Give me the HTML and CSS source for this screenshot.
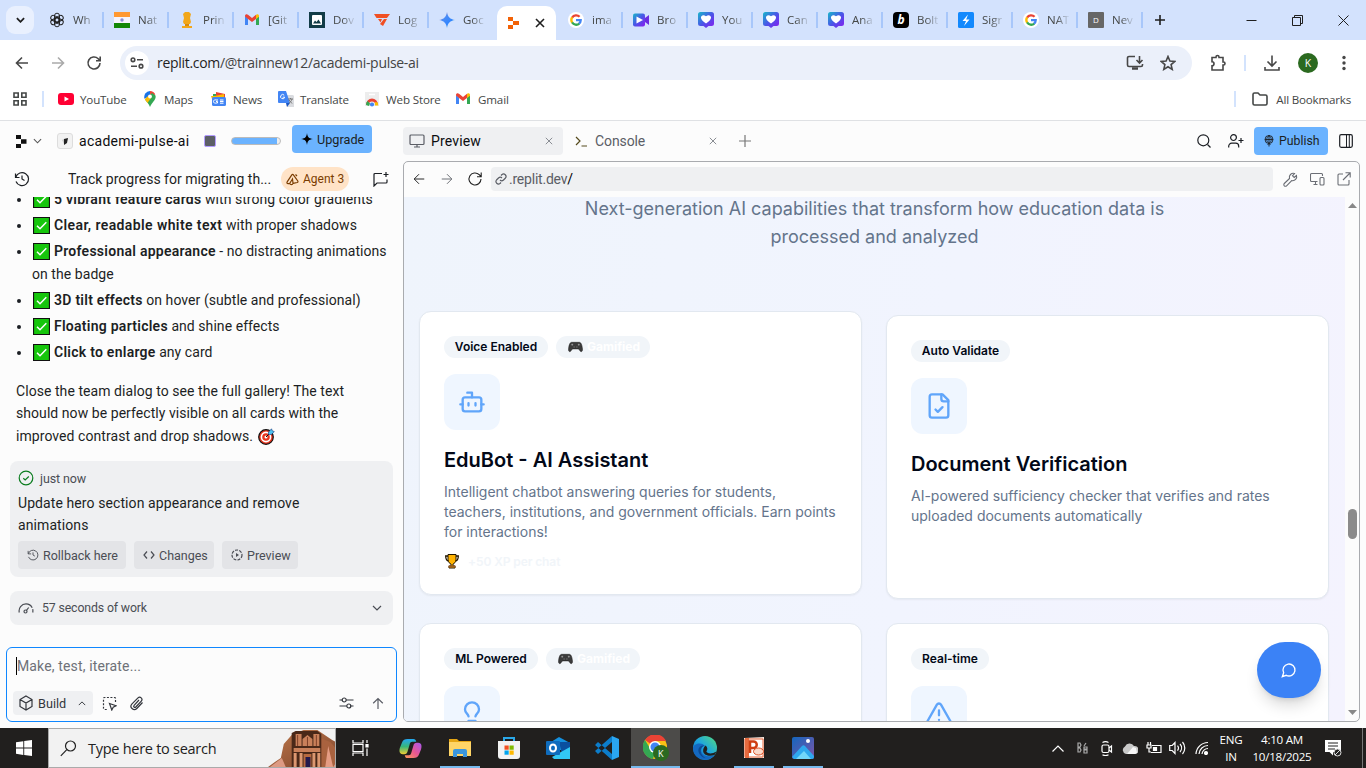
FILE: index.html
```html
<!DOCTYPE html>
<html lang="en">
<head>
<meta charset="utf-8">
<title>academi-pulse-ai - Replit</title>
<link rel="stylesheet" href="styles.css">
</head>
<body>
<svg class="defs" width="0" height="0" aria-hidden="true">
  <defs>
    <linearGradient id="gem" x1="0" y1="0" x2="1" y2="1"><stop offset="0" stop-color="#f24b3f"/><stop offset=".35" stop-color="#4a8bf5"/><stop offset=".65" stop-color="#3186ff"/><stop offset="1" stop-color="#31b568"/></linearGradient>
    <linearGradient id="lov" x1="0" y1="0" x2="1" y2="1"><stop offset="0" stop-color="#18b9c9"/><stop offset=".5" stop-color="#4a55e8"/><stop offset="1" stop-color="#8a1cf0"/></linearGradient>
    <linearGradient id="edge" x1="0" y1="1" x2="1" y2="0"><stop offset="0" stop-color="#1160b7"/><stop offset=".5" stop-color="#1da5e0"/><stop offset="1" stop-color="#55dd7c"/></linearGradient>
    <linearGradient id="cop1" x1="0" y1="0" x2="0" y2="1"><stop offset="0" stop-color="#24a7f2"/><stop offset=".5" stop-color="#37b77a"/><stop offset="1" stop-color="#f2cd32"/></linearGradient>
    <linearGradient id="cop2" x1="1" y1="0" x2="0" y2="1"><stop offset="0" stop-color="#a558ef"/><stop offset=".5" stop-color="#e85693"/><stop offset="1" stop-color="#ff9b55"/></linearGradient>
    <linearGradient id="photo" x1="0" y1="0" x2="1" y2="1"><stop offset="0" stop-color="#1466bd"/><stop offset="1" stop-color="#7d55a8"/></linearGradient>
    <linearGradient id="rock" x1="0" y1="0" x2="1" y2="1"><stop offset="0" stop-color="#bd784b"/><stop offset="1" stop-color="#7e432b"/></linearGradient>
    <symbol id="g" viewBox="0 0 16 16"><circle cx="8" cy="8" r="8" fill="#fff"/><g fill="none" stroke-width="2.3"><path d="M4.1 5.6A4.8 4.8 0 0 1 11.6 4.8" stroke="#ea4335"/><path d="M4.1 10.6A5 5 0 0 1 4.1 5.4" stroke="#fbbc05"/><path d="M11.3 11.6A4.8 4.8 0 0 1 4.1 10.4" stroke="#34a853"/><path d="M8 8.2h4.7A4.6 4.6 0 0 1 11 11.7" stroke="#4285f4"/></g></symbol>
    <symbol id="gmail" viewBox="0 0 16 16"><path d="M1 4v9h3V6.5z" fill="#4285f4"/><path d="M15 4v9h-3V6.5z" fill="#34a853"/><path d="M1 3.8C1 2 3 1.800 4 2.700l4 3.200 4-3.200v4.200L8 10 4 6.900 1 4.600z" fill="#ea4335"/><path d="M12 2.700c1-.9 3-.7 3 1.100v.9l-3 2.200z" fill="#fbbc04"/></symbol>
    <symbol id="heart" viewBox="0 0 16 16"><path d="M2.500 0h11A2.500 2.500 0 0 1 16 2.500v9a2.500 2.500 0 0 1-2.500 2.500h-3L8 16l-2.500-2h-3A2.500 2.500 0 0 1 0 11.500v-9A2.500 2.500 0 0 1 2.500 0z" fill="url(#lov)"/><path d="M8 11.500C-1 6.500 4 .6 8 4.300c4-3.700 9 2.200 0 7.200z" fill="#fff"/></symbol>
    <symbol id="check" viewBox="0 0 17 17"><path d="M.5 .5h16v16H.5z" fill="#16c60c" stroke="#111" stroke-width="1.200"/><path d="M4 8.700l3 3 6.300-6.500" fill="none" stroke="#fff" stroke-width="1.500"/></symbol>
    <symbol id="pad" viewBox="0 0 16 12"><path d="M4 1c-2 0-3 3-3.400 7-.3 3.400 1.800 3.800 3.200 1.200L4.800 8h6.400l1 1.200c1.400 2.600 3.500 2.200 3.200-1.200C15 4 14 1 12 1z" fill="#3b3b3b" stroke="#222" stroke-width=".6"/><path d="M3.500 3.500h2M4.500 2.500v2M10.500 3.500h2M11.500 2.500v2M6 6h1M9 6h1" stroke="#aaa" stroke-width=".8"/></symbol>
    <symbol id="history" viewBox="0 0 16 16"><path d="M1.500 2.500v4h4M1.800 6.300A6.500 6.500 0 1 1 2 10.500M8 4.500V8l2.500 1.500"/></symbol>
    <symbol id="x" viewBox="0 0 10 10"><path d="M1 1l8 8M9 1L1 9"/></symbol>
    <symbol id="left" viewBox="0 0 16 16"><path d="M14 8H2.500M8 2.500L2.500 8 8 13.500"/></symbol>
    <symbol id="right" viewBox="0 0 16 16"><path d="M2 8h11.500M8 2.500L13.500 8 8 13.500"/></symbol>
    <symbol id="reload" viewBox="0 0 16 16"><path d="M14 8a6 6 0 1 1-1.800-4.300L14 5.500M14.200 1.500v4.200H10"/></symbol>
    <symbol id="down" viewBox="0 0 10 6"><path d="M1 1l4 4 4-4"/></symbol>
  </defs>
</svg>

<div class="tabstrip">
  <div class="tabsearch"><svg class="ln bold" width="9" height="6"><use href="#down"/></svg></div>
  <div class="tab"><svg class="ln" width="16" height="16" viewBox="0 0 16 16"><g stroke-width=".95"><rect x="5.500" y="1.200" width="5" height="9" rx="2.500"/><rect x="5.500" y="1.200" width="5" height="9" rx="2.500" transform="rotate(60 8 8)"/><rect x="5.500" y="1.200" width="5" height="9" rx="2.500" transform="rotate(120 8 8)"/><rect x="5.500" y="1.200" width="5" height="9" rx="2.500" transform="rotate(180 8 8)"/><rect x="5.500" y="1.200" width="5" height="9" rx="2.500" transform="rotate(240 8 8)"/><rect x="5.500" y="1.200" width="5" height="9" rx="2.500" transform="rotate(300 8 8)"/></g></svg><span>Wh</span></div>
  <div class="tab"><svg width="16" height="16"><path d="M0 0h16v5H0z" fill="#ff9933"/><path d="M0 5h16v6H0z" fill="#f5f5ff"/><path d="M0 11h16v5H0z" fill="#138808"/><circle cx="8" cy="8" r="1.700" fill="#8d8dd0"/></svg><span>Nat</span></div>
  <div class="tab"><svg width="16" height="16"><path d="M6 0h4l2 2-1 4 1 4-1 2H5l-1-2 1-4-1-4zM3 14h10v2H3z" fill="#f2a71b"/><path d="M6 12h4v2H6z" fill="#d98a0b"/></svg><span>Prin</span></div>
  <div class="tab"><svg width="16" height="16"><use href="#gmail"/></svg><span>[Git</span></div>
  <div class="tab"><svg width="16" height="16"><path d="M0 0h16v16H0z" fill="#123c47"/><rect x="3" y="3" width="10" height="10" rx="1" fill="#fff"/><path d="M4 11.500l2-3 1.500 1.500 2-2.500 2.500 4z" fill="#123c47"/></svg><span>Dov</span></div>
  <div class="tab"><svg width="16" height="16"><path d="M0 2h16l-3 4H2.500zM4 7h4l-1.500 3.500zM10 7h3l-4 7-3-2z" fill="#f04f23"/></svg><span>Log</span></div>
  <div class="tab nosep"><svg width="16" height="16"><path d="M8 0c.8 5 3 7.200 8 8-5 .8-7.200 3-8 8-.8-5-3-7.200-8-8 5-.8 7.200-3 8-8z" fill="url(#gem)"/></svg><span>Goc</span></div>
  <div class="tab active"><svg width="16" height="16"><path d="M3 2h5v4H3zM8 6h6v4H8zM3 10h5v4H3z" fill="#f26207"/></svg><svg class="ln close" width="10" height="10"><use href="#x"/></svg></div>
  <div class="tab"><svg width="16" height="16"><use href="#g"/></svg><span>ima</span></div>
  <div class="tab"><svg width="16" height="16"><rect y="1.500" width="12" height="13" rx="2" fill="url(#lov)"/><path d="M12 6l4-3v10l-4-3z" fill="#6c2be0"/><path d="M3.500 4.500L10 8l-6.500 3.500z" fill="#fff"/></svg><span>Bro</span></div>
  <div class="tab"><svg width="16" height="16"><use href="#heart"/></svg><span>You</span></div>
  <div class="tab"><svg width="16" height="16"><use href="#heart"/></svg><span>Can</span></div>
  <div class="tab"><svg width="16" height="16"><use href="#heart"/></svg><span>Ana</span></div>
  <div class="tab"><i class="fav bolt">b</i><span>Bolt</span></div>
  <div class="tab"><svg width="16" height="16"><rect width="16" height="16" rx="1.500" fill="#1389fd"/><path d="M10 2.500L4.500 9H8l-2 5 5.500-6.500H8.200z" fill="#fff"/></svg><span>Sigr</span></div>
  <div class="tab"><svg width="16" height="16"><use href="#g"/></svg><span>NAT</span></div>
  <div class="tab"><i class="fav dee">D</i><span>Nev</span></div>
  <svg class="ln newtab" width="12" height="12" viewBox="0 0 12 12"><path d="M6 1v10M1 6h10"/></svg>
  <div class="winctl">
    <svg class="ln" width="11" height="11" viewBox="0 0 11 11"><path d="M.5 5.500h10"/></svg>
    <svg class="ln" width="11" height="11" viewBox="0 0 11 11"><path d="M.5 2.500h8v8h-8zM2.500 2.500v-2h8v8h-2"/></svg>
    <svg class="ln" width="11" height="11" viewBox="0 0 11 11"><path d="M.5 .5l10 10M10.500 .5l-10 10"/></svg>
  </div>
</div>

<div class="toolbar">
  <svg class="ln nav" width="16" height="16"><use href="#left"/></svg>
  <svg class="ln nav dim" width="16" height="16"><use href="#right"/></svg>
  <svg class="ln nav" width="16" height="16"><use href="#reload"/></svg>
  <div class="omnibox">
    <div class="site"><svg class="ln" width="14" height="12" viewBox="0 0 14 12"><circle cx="3" cy="2.800" r="1.800"/><path d="M7 2.800h6M1 9.200h6"/><circle cx="11" cy="9.200" r="1.800"/></svg></div>
    <span class="url"><b>replit.com</b>/@trainnew12/academi-pulse-ai</span>
    <svg class="ln" width="18" height="16" viewBox="0 0 18 16"><path d="M9 1.500H3a1.500 1.500 0 0 0-1.500 1.500v7A1.500 1.500 0 0 0 3 11.500h12a1.500 1.500 0 0 0 1.500-1.500V9M13.500 1v6.500M10.500 5l3 3 3-3"/><path d="M6 13.500h6" stroke-width="2.500"/></svg>
    <svg class="ln star" width="16" height="16" viewBox="0 0 16 16"><path d="M8 1.500l1.900 4.500 4.900.4-3.700 3.200 1.100 4.800L8 11.800l-4.200 2.600 1.100-4.800L1.200 6.400 6.100 6z"/></svg>
  </div>
  <svg class="ln ext" width="18" height="18" viewBox="0 0 18 18"><path d="M3 3.500h4V3a1.500 1.500 0 0 1 3 0v.5h4V8h.5a1.500 1.500 0 0 1 0 3H14v5H3v-4.300a2 2 0 0 0 0-4z"/></svg>
  <i class="vbar"></i>
  <svg class="ln dl" width="18" height="18" viewBox="0 0 18 18"><path d="M9 1.500v10M4.500 7.500L9 12l4.500-4.500M2 13v3h14v-3"/></svg>
  <div class="avatar">K</div>
  <svg class="dots" width="4" height="16"><circle cx="2" cy="2.500" r="1.700"/><circle cx="2" cy="8" r="1.700"/><circle cx="2" cy="13.500" r="1.700"/></svg>
</div>

<div class="bookmarks">
  <svg class="ln apps" width="14" height="14" viewBox="0 0 14 14"><path d="M1 1h4.200v4.200H1zM8.800 1H13v4.200H8.800zM1 8.800h4.200V13H1zM8.800 8.800H13V13H8.800z"/></svg>
  <i class="vbar"></i>
  <div class="bm yt"><svg width="16" height="12"><rect width="16" height="12" rx="3" fill="#ff0033"/><path d="M6.500 3.500v5L11 6z" fill="#fff"/></svg><span>YouTube</span></div>
  <div class="bm mp"><svg width="12" height="16"><path d="M6 0a6 6 0 0 0-5.500 7.800L6 5z" fill="#1a73e8"/><path d="M6 0a5.800 5.800 0 0 1 5.300 3.500L6 5.500z" fill="#ea4335"/><path d="M1 8.500L8 2l3.500 2.500c1 4-3 6-5.500 11.500C5 12.500 2 10.500 1 8.500z" fill="#34a853"/><path d="M.8 8.300L5 4l2 3-3.500 5z" fill="#fbbc04"/><circle cx="6" cy="5.500" r="1.900" fill="#fff"/></svg><span>Maps</span></div>
  <div class="bm nw"><svg width="16" height="16"><path d="M2 3h12v5H2z" fill="#34a853"/><path d="M5 1l9 2v5H5z" fill="#ea4335"/><path d="M0 5h4l9-2v5H1z" fill="#fbbc04"/><rect x="1" y="6" width="14" height="9" rx="1.500" fill="#4285f4"/><path d="M7 9H5a1.700 1.700 0 1 0 0 3h1.500v-1.500H5M9 9h3.500M9 10.500h3.500M9 12.200h3.500" stroke="#fff" fill="none"/></svg><span>News</span></div>
  <div class="bm tr"><svg width="16" height="16"><path d="M6 4h9l1 1v11H9z" fill="#dadce0"/><path d="M1 0h7l4 12H1a1 1 0 0 1-1-1V1a1 1 0 0 1 1-1z" fill="#4285f4"/><path d="M8 12h4l-3 4z" fill="#1a56c4"/><path d="M10 8h5M12.500 7v1M14 8c-.5 2-2 3.500-3 4M11 9l3 3.500" stroke="#777" fill="none"/><path d="M6.200 4.200a2.100 2.100 0 1 0 .5 2H4.700" stroke="#fff" fill="none"/></svg><span>Translate</span></div>
  <div class="bm ws"><svg width="16" height="16"><path d="M1 1h14v14H1z" fill="#ededed"/><path d="M3.500 13.500a4.500 4.500 0 0 1 9 0" fill="none" stroke="#ea4335" stroke-width="2.800"/><path d="M2 14a6 6 0 0 1 1.500-4L6 12.500 5 15z" fill="#34a853"/><path d="M11 11l2.800.5.500 3h-3.300z" fill="#fbbc04"/><circle cx="8" cy="13.500" r="2.100" fill="#4285f4"/><path d="M5 3.500h6" stroke="#fff" stroke-width="1.500"/></svg><span>Web Store</span></div>
  <div class="bm gm"><svg width="16" height="16"><use href="#gmail"/></svg><span>Gmail</span></div>
  <i class="vbar last"></i>
  <svg class="ln" width="16" height="14" viewBox="0 0 16 14"><path d="M1 2.500A1.500 1.500 0 0 1 2.500 1h3.500l2 2h5.500A1.500 1.500 0 0 1 15 4.500v7a1.500 1.500 0 0 1-1.500 1.500h-11A1.500 1.500 0 0 1 1 11.500z"/></svg>
  <span class="allbm">All Bookmarks</span>
</div>

<div class="app">
  <section class="side">
    <header class="sidehead">
      <svg class="rlogo" width="12" height="13"><path d="M1 0h5v4H1zM6 4.300h5.500v4.400H6zM1 9h5v4H1z"/></svg>
      <svg class="ln chev" width="9" height="6"><use href="#down"/></svg>
      <div class="pjicon"><svg width="8" height="8"><path d="M3 2l4-1-1 5-3 2z" fill="#222"/><path d="M1 3l2-1v5z" fill="#ccc"/></svg></div>
      <span class="pjname">academi-pulse-ai</span>
      <i class="stop"></i>
      <i class="meter"></i>
      <button class="upgrade"><svg width="12" height="12"><path d="M6 0c.6 4 1.500 5.400 6 6-4.500.6-5.400 2-6 6-.6-4-1.500-5.400-6-6 4.500-.6 5.400-2 6-6z"/></svg><span>Upgrade</span></button>
    </header>
    <div class="thread">
      <svg class="ln" width="16" height="16"><use href="#history"/></svg>
      <span class="ttl">Track progress for migrating th...</span>
      <div class="agent"><svg class="ln" width="13" height="13" viewBox="0 0 13 13"><path d="M1 9.200L5.800 1.800a1 1 0 0 1 1.600 0L11.800 8a1 1 0 0 1-.6 1.500L7 10.300M1 9.200c-.3 1 .3 1.600 1.300 1.400l1.500-.3M3.800 10.300L6.500 6l.5 4.300M3.800 10.300c.5 1.700 2.700 1.700 3.200 0M9.500 1.500l1.500 1.500"/></svg><span>Agent 3</span></div>
      <svg class="ln newchat" width="16" height="16" viewBox="0 0 16 16"><path d="M9 2.500H2a1 1 0 0 0-1 1V15l3-3h9a1 1 0 0 0 1-1V8.500M13 1v5M10.500 3.500h5"/></svg>
    </div>
    <div class="chat">
      <ul>
        <li><svg width="17" height="17"><use href="#check"/></svg><b>5 vibrant feature cards</b> with strong color gradients</li>
        <li><svg width="17" height="17"><use href="#check"/></svg><b class="wide">Clear, readable white text</b> with proper shadows</li>
        <li><svg width="17" height="17"><use href="#check"/></svg><b>Professional appearance</b> - no distracting animations<br>on the badge</li>
        <li><svg width="17" height="17"><use href="#check"/></svg><b>3D tilt effects</b> on hover (subtle and professional)</li>
        <li><svg width="17" height="17"><use href="#check"/></svg><b>Floating particles</b> and shine effects</li>
        <li><svg width="17" height="17"><use href="#check"/></svg><b>Click to enlarge</b> any card</li>
      </ul>
      <p>Close the team dialog to see the full gallery! The text<br>should now be perfectly visible on all cards with the<br>improved contrast and drop shadows. <svg class="target" width="17" height="17" viewBox="0 0 17 17"><circle cx="8" cy="9" r="7.300" fill="#e8341c" stroke="#111" stroke-width="1.200"/><circle cx="8" cy="9" r="4.600" fill="none" stroke="#fff" stroke-width="1.600"/><circle cx="8" cy="9" r="1.500" fill="#fff"/><path d="M8 9l6-6" stroke="#111"/><path d="M10.500 6.500V4L13.500.8l.8 2 2 .8-3 3z" fill="#4cc2f1" stroke="#137" stroke-width=".6"/></svg></p>
    </div>
    <div class="commit">
      <div class="when"><svg class="ln" width="16" height="16" viewBox="0 0 16 16"><circle cx="8" cy="8" r="6.800"/><path d="M5.300 8.200l1.900 1.800 3.600-3.500"/></svg><span>just now</span></div>
      <p>Update hero section appearance and remove<br>animations</p>
      <div class="acts">
        <button class="rb"><svg class="ln" width="12" height="12"><use href="#history"/></svg><span>Rollback here</span></button>
        <button class="chg"><svg class="ln" width="12" height="12" viewBox="0 0 12 12"><path d="M4 2.500L1 6l3 3.500M8 2.500L11 6 8 9.500"/></svg><span>Changes</span></button>
        <button class="pv"><svg class="ln" width="12" height="12" viewBox="0 0 12 12"><circle cx="6" cy="6" r="5" stroke-dasharray="3 1.200"/><path d="M5 4v4l3-2z" fill="currentColor" stroke="none"/></svg><span>Preview</span></button>
      </div>
    </div>
    <div class="work"><svg class="ln" width="16" height="14" viewBox="0 0 16 14"><path d="M1.300 11.500A6.900 6.900 0 1 1 14.700 11.500" stroke-dasharray="20 1.500"/><circle cx="7.500" cy="10.500" r="1.500"/><path d="M8.500 9.300L10.700 6.500"/></svg><span>57 seconds of work</span><svg class="ln" width="10" height="6"><use href="#down"/></svg></div>
    <div class="prompt">
      <div class="ph">Make, test, iterate...</div>
      <div class="ctl">
        <div class="build"><svg class="ln" width="14" height="16" viewBox="0 0 14 16"><path d="M7 1l6 3.500v7L7 15l-6-3.500v-7zM1 4.500L7 8l6-3.500M7 8v7"/></svg><span>Build</span><svg class="ln up" width="8" height="5"><use href="#down"/></svg></div>
        <svg class="ln" width="15" height="15" viewBox="0 0 15 15"><path d="M13.500 6V2.500a1 1 0 0 0-1-1h-10a1 1 0 0 0-1 1v10a1 1 0 0 0 1 1H6" stroke-dasharray="2 1.500"/><path d="M7.500 7.500l6.500 2.300-2.800 1.400-1.400 2.800z"/></svg>
        <svg class="ln clip" width="14" height="15" viewBox="0 0 14 15"><path d="M12.500 6.500l-5.700 6a3.300 3.300 0 0 1-4.800-4.700L8 1.900a2.300 2.300 0 0 1 3.300 3.200L5.800 11a1.200 1.200 0 0 1-1.700-1.700L9 4"/></svg>
        <svg class="ln tune" width="15" height="14" viewBox="0 0 15 14"><path d="M.5 4h2.700M7.300 4h7.200M.5 10h7.200M11.800 10h2.700"/><circle cx="5.200" cy="4" r="2"/><circle cx="9.800" cy="10" r="2"/></svg>
        <svg class="ln send" width="12" height="13" viewBox="0 0 12 13"><path d="M6 12V1.500M1.200 6.200L6 1.500l4.800 4.700"/></svg>
      </div>
    </div>
  </section>

  <section class="work-area">
    <header class="panes">
      <div class="pane on"><svg class="ln" width="16" height="14" viewBox="0 0 16 14"><rect x="1" y="1" width="14" height="9.500" rx="1"/><path d="M8 10.500V13M5 13h6"/></svg><span>Preview</span><svg class="ln cx" width="8" height="8"><use href="#x"/></svg></div>
      <div class="pane"><svg class="ln term" width="12" height="12" viewBox="0 0 12 12"><path d="M1 2l4 4-4 4M6.500 11H12"/></svg><span>Console</span><svg class="ln cx" width="8" height="8"><use href="#x"/></svg></div>
      <svg class="ln add" width="12" height="12" viewBox="0 0 12 12"><path d="M6 0v12M0 6h12"/></svg>
      <div class="right">
        <svg class="ln" width="14" height="14" viewBox="0 0 14 14"><circle cx="6.300" cy="6.300" r="5.500"/><path d="M10.500 10.500L13.500 13.500"/></svg>
        <svg class="ln" width="16" height="14" viewBox="0 0 16 14"><circle cx="5.500" cy="3.600" r="2.900"/><path d="M.7 13.500v-1.300a3 3 0 0 1 3-3h4a3 3 0 0 1 3 3v1.300M13 4v5M10.500 6.500h5"/></svg>
        <button class="publish"><svg class="ln" width="10" height="12" viewBox="0 0 10 12"><g stroke-width=".9"><circle cx="5" cy="4.500" r="4"/><path d="M1 4.500h8M5 .5v11M5 .5C2 3 2 6 5 8.500 8 6 8 3 5 .5M3.500 10L5 8.500 6.500 10"/></g></svg><span>Publish</span></button>
        <svg class="ln" width="14" height="14" viewBox="0 0 14 14"><rect x=".7" y=".7" width="12.600" height="12.600" rx="1.500"/><path d="M7.500 1v12M10.300 1v12" stroke-width="1"/></svg>
      </div>
    </header>
    <div class="frame">
      <div class="framebar">
        <svg class="ln" width="14" height="14"><use href="#left"/></svg>
        <svg class="ln" width="14" height="14"><use href="#right"/></svg>
        <svg class="ln rl" width="16" height="16"><use href="#reload"/></svg>
        <div class="addr"><svg class="ln" width="12" height="12" viewBox="0 0 12 12"><path d="M5 7a2.500 2.500 0 0 0 3.500 0l2-2A2.500 2.500 0 0 0 7 1.500l-1 1M7 5a2.500 2.500 0 0 0-3.500 0l-2 2A2.500 2.500 0 0 0 5 10.500l1-1"/></svg><span>.replit.dev<b>/</b></span></div>
        <svg class="ln" width="15" height="15" viewBox="0 0 15 15"><path d="M13.500 3.500l-2.300 2-1.700-1.700 2-2.300a4 4 0 0 0-5 5L1.300 11.500a1.600 1.600 0 0 0 2.300 2.300L8.700 8.600a4 4 0 0 0 4.800-5.100z"/></svg>
        <svg class="ln" width="15" height="14" viewBox="0 0 15 14"><path d="M7.500 9.500H1.500a1 1 0 0 1-1-1v-6a1 1 0 0 1 1-1h10a1 1 0 0 1 1 1V4M5.500 9.500v3M3.500 12.500h4"/><rect x="10" y="5.500" width="4" height="7.500" rx="1"/></svg>
        <svg class="ln" width="14" height="14" viewBox="0 0 14 14"><path d="M6 2H2a1 1 0 0 0-1 1v9a1 1 0 0 0 1 1h9a1 1 0 0 0 1-1V8M8.500 .8h4.700v4.700M13 1L6 8"/></svg>
      </div>
      <div class="view">
        <div class="page">
          <p class="lead">Next-generation AI capabilities that transform how education data is<br>processed and analyzed</p>
          <div class="grid">
            <article class="card lift">
              <div class="badges"><span class="badge" style="width:104px">Voice Enabled</span><span class="badge ghost"><svg width="15" height="12"><use href="#pad"/></svg><em>Gamified</em></span></div>
              <div class="ibox"><svg class="ln" width="28" height="28" viewBox="0 0 24 24"><path d="M12 8V4H8"/><rect width="16" height="12" x="4" y="8" rx="2"/><path d="M2 14h2M20 14h2M15 13v2M9 13v2"/></svg></div>
              <h3>EduBot - AI Assistant</h3>
              <p>Intelligent chatbot answering queries for students,<br>teachers, institutions, and government officials. Earn points<br>for interactions!</p>
              <div class="xp"><svg width="16" height="16" viewBox="0 0 16 16"><path d="M4 3H1.700c0 3 .8 5 3.300 5M12 3h2.300c0 3-.8 5-3.300 5" fill="none" stroke="#221600" stroke-width="1.300"/><path d="M4 1.500h8v5c0 3-2 4-3 4.500v2h2V15H5v-2h2v-2C6 10.500 4 9.500 4 6.500z" fill="#ffb302" stroke="#221600"/><path d="M4.500 13.500h7" stroke="#9b5e20" stroke-width="2"/></svg><span>+50 XP per chat</span></div>
            </article>
            <article class="card">
              <div class="badges"><span class="badge" style="width:99px">Auto Validate</span></div>
              <div class="ibox"><svg class="ln" width="28" height="28" viewBox="0 0 24 24"><path d="M15 2H6a2 2 0 0 0-2 2v16a2 2 0 0 0 2 2h12a2 2 0 0 0 2-2V7z"/><path d="M14 2v4a2 2 0 0 0 2 2h4M9 15l2 2 4-4"/></svg></div>
              <h3>Document Verification</h3>
              <p>AI-powered sufficiency checker that verifies and rates<br>uploaded documents automatically</p>
            </article>
            <article class="card">
              <div class="badges"><span class="badge" style="width:94px">ML Powered</span><span class="badge ghost"><svg width="15" height="12"><use href="#pad"/></svg><em>Gamified</em></span></div>
              <div class="ibox"><svg class="ln" width="28" height="28" viewBox="0 0 24 24"><path d="M15 14c.2-1 .7-1.700 1.500-2.500 1-.9 1.500-2.200 1.500-3.500A6 6 0 0 0 6 8c0 1 .2 2.200 1.500 3.500.7.7 1.300 1.500 1.500 2.500M9 18h6M10 22h4"/></svg></div>
            </article>
            <article class="card">
              <div class="badges"><span class="badge" style="width:78px">Real-time</span></div>
              <div class="ibox"><svg class="ln" width="28" height="28" viewBox="0 0 24 24"><path d="M21.700 18l-8-14a2 2 0 0 0-3.500 0l-8 14A2 2 0 0 0 4 21h16a2 2 0 0 0 1.700-3M12 9v4M12 17h.01"/></svg></div>
            </article>
          </div>
          <button class="fab"><svg class="ln" width="16" height="16" viewBox="0 0 24 24"><path d="M7.900 20A9 9 0 1 0 4 16.100L2 22z"/></svg></button>
        </div>
        <div class="scroll"><svg width="9" height="5"><path d="M4.500 0L9 5H0z"/></svg><i></i><svg width="9" height="5"><path d="M0 0h9L4.500 5z"/></svg></div>
      </div>
    </div>
  </section>
</div>

<footer class="taskbar">
  <div class="start"><svg width="16" height="16"><path d="M0 2.300L7.300 1.200v6.400H0zM8.200 1.100L16 0v7.600H8.200zM0 8.500h7.300v6.400L0 13.800zM8.200 8.500H16V16l-7.800-1.100z" fill="#fff"/></svg></div>
  <div class="search"><svg class="ln" width="17" height="17" viewBox="0 0 17 17"><circle cx="10.500" cy="6" r="5"/><path d="M6.800 9.700L.8 15.800"/></svg><span>Type here to search</span>
    <svg class="petra" width="76" height="38" viewBox="0 0 77 38" preserveAspectRatio="none"><path d="M0 38l7-5 6-4 3-14 8-9 12-5h14l15 10 9 5 3 6v16z" fill="url(#rock)"/><path d="M53 38V9l10 4 10 11v14z" fill="#a9623f"/><path d="M58 38l3-21 5 21z" fill="#e59c84"/><path d="M66 38l10-14v14zM2 38l12-9 4 9z" fill="#dd9a83"/><path d="M24 38V4l4-2h22l4 3v33z" fill="#4a2818"/><path d="M28 5h6v12h-6zM46 5h6v12h-6zM35 10l5-4 5 4v7H35zM26 19h27v4H26z" fill="#c9805a"/><path d="M26 24h3v14h-3zM32 24h3v14h-3zM45 24h3v14h-3zM50 24h3v14h-3z" fill="#dc9770"/><path d="M36 25h8v13h-8z" fill="#b66a40"/><path d="M38 28h5v10h-5z" fill="#23194d"/><path d="M30 6v11M49 6v11M40 8v9" stroke="#803f28"/></svg></div>
  <div class="task"><svg class="ln tv" width="17" height="16" viewBox="0 0 17 16"><path d="M1 0v3h10V0M1 4.500h10v7H1zM1 16v-3h10v3M15 0v3M15 8.500V16"/><path d="M14 4.500h2v2.500h-2z" fill="#fff"/></svg></div>
  <div class="task"><svg width="23" height="21" viewBox="0 0 24 22"><path d="M9 1h6c2 0 2.500 1 3 3H14c-2 0-2.500 1-3 3l-2 7c-.6 2-1.500 3-3.500 3H4c-4 0-4-4-3-7l2-5c1-3 3-4 6-4z" fill="url(#cop1)"/><path d="M15 21H9c-2 0-2.500-1-3-3h4c2 0 2.500-1 3-3l2-7c.6-2 1.500-3 3.500-3H20c4 0 4 4 3 7l-2 5c-1 3-3 4-6 4z" fill="url(#cop2)"/></svg></div>
  <div class="task run"><svg width="22" height="20"><path d="M0 1h8l2 2h12v15H0z" fill="#e6a614"/><path d="M0 4h22v14H0z" fill="#ffd567"/><path d="M4 19v-6a2 2 0 0 1 2-2h10a2 2 0 0 1 2 2v6h-4v-3H8v3z" fill="#3c96dc"/></svg></div>
  <div class="task"><svg width="24" height="24"><path d="M7 7V2h10v5" fill="none" stroke="#2aa7e8" stroke-width="2"/><path d="M1 5h22v15a3 3 0 0 1-3 3H4a3 3 0 0 1-3-3z" fill="#f2f2f2"/><path d="M7.500 9.500h4.200v4.200H7.500z" fill="#f25022"/><path d="M12.500 9.500h4.200v4.200h-4.200z" fill="#7fba00"/><path d="M7.500 14.500h4.200v4.200H7.500z" fill="#00a4ef"/><path d="M12.500 14.500h4.200v4.200h-4.200z" fill="#ffb900"/></svg></div>
  <div class="task"><svg width="24" height="23"><path d="M5 5l8-5 11 6v7H5z" fill="#1490df"/><path d="M13 5h11v6l-8 6z" fill="#0a4f9f"/><path d="M6 20l18-10v12H8z" fill="#32c8f4"/><rect y="4" width="14" height="14" rx="1" fill="#0f6cbd"/><ellipse cx="7" cy="11" rx="3" ry="3.600" fill="none" stroke="#fff" stroke-width="2"/></svg></div>
  <div class="task"><svg width="24" height="24"><path d="M17 0l7 3v18l-7 3z" fill="#2aa6f2"/><path d="M17 0v6L3 18l-3-3zM17 24v-6L3 6 0 9z" fill="#0c7dcb"/></svg></div>
  <div class="task run cur"><svg width="26" height="26"><circle cx="12" cy="12" r="12" fill="#fbc116"/><path d="M12 12L2 5a12 12 0 0 1 21 1H12z" fill="#ea4335"/><path d="M2 5l6 10 4 2-2 7A12 12 0 0 1 2 5z" fill="#34a853"/><circle cx="12" cy="12" r="6" fill="#fff"/><circle cx="12" cy="12" r="4.500" fill="#4285f4"/><circle cx="18" cy="18" r="8" fill="#2b6a20"/></svg><b>K</b></div>
  <div class="task"><svg width="24" height="24"><circle cx="12" cy="12" r="12" fill="url(#edge)"/><path d="M0 12c1-5 9-6 12-2-3 0-4.500 3-3.500 6 1.500 4.500 8 5.500 13 3A12 12 0 0 1 0 12z" fill="#1468c0"/><path d="M8.500 12c-2 3 0 8 4 10-4-.5-8-5-7-9 .5-2 3-4 6-3.500-1 .5-2.500 1.500-3 2.500z" fill="#0c4a92"/><path d="M12.500 9.500c2 1.500 2.500 4 .8 6 1.500 2.500 6 2.500 10.200 0l-1.700 3.300c-5 2.200-11 .5-11.600-3.300-.3-2.500.6-4.500 2.300-6z" fill="#21201e"/></svg></div>
  <div class="task run"><svg width="22" height="22"><path d="M1 1l20-1v21H1z" fill="#f7e7df"/><path d="M2 2h18v18H2z" fill="#fff" stroke="#e8673c"/><path d="M2 1h4v20H2z" fill="#e66b3f"/><path d="M7 16V4.500h3.500a3 3 0 0 1 0 6.500H7" stroke="#cf3f13" stroke-width="2.500" fill="#fff"/><ellipse cx="15.500" cy="14.500" rx="5" ry="3.500" fill="#fbd9ca" stroke="#dd5024"/></svg></div>
  <div class="task run"><svg width="22" height="22"><rect width="22" height="22" rx="2" fill="url(#photo)"/><path d="M0 20L10 9a2 2 0 0 1 3 0l9 10v1a2 2 0 0 1-2 2H2z" fill="#2fa8ee"/><path d="M4 22l8-8 7 8z" fill="#72d7fa"/><circle cx="16" cy="4" r="2" fill="#fff"/></svg></div>
  <div class="tray">
    <svg class="ln" width="12" height="7" viewBox="0 0 12 7"><path d="M.5 6.500L6 1l5.500 5.500"/></svg>
    <svg class="ln t2" width="12" height="12" viewBox="0 0 12 12"><path d="M2 1h2l1 2-1 2H2zM2 6h2l1 2-1 2H2zM8 4l2-3M8 5h3v2H8zM8 8h3v3H8z" stroke="#aaa"/></svg>
    <svg class="ln t3" width="14" height="15" viewBox="0 0 14 15"><rect x="3" y="4" width="7" height="7.500" rx="1.500"/><path d="M10 7l2.500-2v6L10 9M3.500 1.500c2-1.200 4-1.200 6 0M3.500 13.700c2 1.200 4 1.200 6 0"/></svg>
    <svg class="t4" width="16" height="11"><path d="M4 11a4 4 0 0 1-1-7.500A5 5 0 0 1 12 3a4 4 0 0 1 1 8z" fill="#c9c9c9"/><path d="M5 11l6-7 3 1 1 5-2 1z" fill="#f7f7f7"/></svg>
    <svg class="ln t5" width="16" height="12" viewBox="0 0 16 12"><path d="M6 3.500h9v7H5M1 3h4v3H1zM2 3V0M4.500 3V0M3 6v4h2"/><path d="M7.500 5.500h3v3h-3z" fill="#fff"/></svg>
    <svg class="ln t6" width="17" height="14" viewBox="0 0 17 14"><path d="M.7 4.500h2.500L6 1.500v11L3.200 9.500H.7zM8.500 4.500a4 4 0 0 1 0 5M11 3a6 6 0 0 1 0 8M13.500 1a9 9 0 0 1 0 12"/></svg>
    <svg class="ln t7" width="14" height="14" viewBox="0 0 14 14"><path d="M1 13A12 12 0 0 1 13 1.500M4 13a9 9 0 0 1 9-8.500M7 13a6 6 0 0 1 6-5.500"/><circle cx="11" cy="12" r="1.500" fill="#fff"/></svg>
    <div class="lang">ENG<br>IN</div>
    <div class="clock">4:10 AM<br>10/18/2025</div>
    <svg class="note" width="17" height="17"><path d="M0 0h16v12H8v3.500L4.500 12H0z" fill="#fff"/><path d="M3 3h10M3 6h10M3 9h7" stroke="#222"/><circle cx="12.500" cy="12.500" r="3.500" fill="#222" stroke="#ddd"/><path d="M10 15l5-5" stroke="#ddd"/></svg>
    <i class="peek"></i>
  </div>
</footer>
</body>
</html>
```
FILE: styles.css
```css
* { box-sizing: border-box; }
body { margin: 0; width: 1366px; height: 768px; overflow: hidden; display: flex; flex-direction: column; background: #fcfcfc; font-family: "Open Sans", "Noto Sans", sans-serif; white-space: nowrap; }
svg { flex: none; display: block; }
.defs { position: absolute; }
.ln { fill: none; stroke: currentColor; stroke-width: 1.2; }
button { border: 0; padding: 0; font: inherit; color: inherit; display: flex; align-items: center; }
i, em { font-style: normal; }

/* browser tabs */
.tabstrip { height: 40px; flex: none; background: #d3e2fd; display: flex; align-items: center; color: #1f1f1f; }
.tabsearch { width: 28px; height: 28px; border-radius: 9px; background: #e9f0fe; margin: 0 5px 0 6px; display: grid; place-items: center; }
.bold { stroke-width: 2; }
.tab { width: 65px; height: 16px; display: flex; align-items: center; padding-left: 10px; border-right: 2px solid #a8c7fa; }
.tab > span { margin-left: 8px; font-size: 11.5px; line-height: 16px; color: #444746; -webkit-mask-image: linear-gradient(90deg, #000 9px, transparent 23px); mask-image: linear-gradient(90deg, #000 9px, transparent 23px); }
.nosep { border-color: transparent; }
.tab.active { height: 34px; margin: 6px 2px 0 3px; width: 59px; padding-left: 8px; background: #fff; border: 0; border-radius: 10px 10px 0 0; }
.close { margin-left: 14px; stroke-width: 1.6; }
.fav { width: 16px; height: 16px; text-align: center; font-size: 12px; line-height: 15px; color: #fff; font-weight: 700; }
.bolt { background: #000; border-radius: 4px; font-style: italic; }
.dee { background: #666; border-radius: 1px; font-size: 8px; line-height: 16px; font-weight: 400; }
.newtab { margin-left: 11px; stroke-width: 1.6; }
.winctl { margin-left: auto; padding-right: 17px; display: flex; gap: 35px; }
.winctl svg { stroke-width: 1; }

/* address row */
.toolbar { height: 46px; flex: none; background: #fff; display: flex; align-items: center; color: #474747; padding-left: 14px; }
.toolbar .ln { stroke-width: 1.6; }
.nav { margin-right: 20px; }
.dim { color: #aaa; }
.omnibox { width: 1072px; height: 34px; border-radius: 17px; background: #ebf0fa; display: flex; align-items: center; padding-left: 5px; margin-left: -2px; }
.site { width: 24px; height: 24px; border-radius: 50%; background: #fff; display: grid; place-items: center; }
.url { width: 969px; margin: -1px 0 0 8px; font-size: 14px; letter-spacing: -.3px; color: #444; }
.url b { font-weight: 400; color: #1f1f1f; }
.star { margin-left: 16px; }
.ext { margin-left: 17px; }
.vbar { width: 2px; height: 16px; background: #d3e3fd; margin-left: 17px; }
.dl { margin-left: 17px; }
.avatar { width: 20px; height: 20px; border-radius: 50%; background: #2b6a20; color: #fff; font-size: 10.500px; line-height: 20px; text-align: center; margin-left: 17px; }
.dots { margin-left: 24px; fill: #474747; }

/* bookmarks */
.bookmarks { height: 35px; flex: none; background: #fff; border-bottom: 1px solid #dfe1e4; display: flex; align-items: center; padding: 0 15px 8px 13px; font-size: 11.600px; color: #444746; }
.bookmarks .ln { stroke-width: 1.6; }
.bookmarks .vbar { margin-left: 15px; }
.bm { display: flex; align-items: center; }
.bm span { margin-left: 6px; }
.yt { margin-left: 14px; width: 86px; }
.mp { width: 67px; }
.mp span { margin-left: 8px; }
.nw { width: 67px; }
.tr { width: 86px; }
.ws { width: 91px; }
.gm span { margin-left: 7px; }
.bm span { letter-spacing: -.15px; }
.bookmarks .last { margin-left: auto; margin-right: 16px; }
.allbm { margin-left: 8px; letter-spacing: -.2px; }

/* agent sidebar */
.app { height: 607px; flex: none; display: flex; font-family: Roboto, sans-serif; color: #1c1f24; }
.side { width: 403px; flex: none; }
.sidehead { height: 40px; display: flex; align-items: center; }
.rlogo { margin-left: 15px; fill: #111; }
.chev { margin-left: 6px; color: #555; }
.pjicon { width: 16px; height: 16px; border: 1px solid #ddd; border-radius: 3px; background: #f2f2f2; margin-left: 15px; display: grid; place-items: center; }
.pjname { margin-left: 6px; width: 125px; font-size: 14px; letter-spacing: .28px; color: #0c0d10; }
.stop { width: 12px; height: 12px; background: #5c5f66; border: 1px solid #b39cff; border-radius: 2px; }
.meter { width: 50px; height: 8px; margin-left: 15px; border: 1px solid #bbb; border-radius: 4px; background: linear-gradient(90deg, #6bb3ff 45px, #eee 45px); }
.upgrade { width: 80px; height: 28px; margin: -4px 0 0 11px; background: #6bb3ff; border-radius: 4px; padding-left: 9px; gap: 4px; font-size: 12.700px; }
.thread { height: 36px; display: flex; align-items: center; padding-left: 14px; }
.ttl { margin-left: 38px; width: 213px; font-size: 14px; }
.agent { width: 68px; height: 24px; border-radius: 12px; background: #ffe3c7; color: #7a3c00; display: flex; align-items: center; padding-left: 5px; gap: 4px; font-size: 12px; }
.newchat { margin-left: 24px; }
.chat { height: 264px; overflow: hidden; font-size: 14px; line-height: 22.500px; letter-spacing: .06px; }
.chat ul { margin: -9.500px 0 0; padding-left: 32px; }
.chat li { margin-bottom: 3.800px; }
.chat li svg { display: inline-block; vertical-align: -4px; margin: 0 4px 0 1px; }
.chat b { font-weight: 600; letter-spacing: .26px; }
.chat b.wide { letter-spacing: .4px; }
.chat p { margin: 16px 0 0 16px; }
.target { display: inline-block; vertical-align: -4px; margin-left: 1px; }
.commit { margin: 0 10px; width: 383px; height: 116px; border-radius: 8px; background: #eff0f2; padding: 9px 8px 0; }
.when { height: 16px; display: flex; align-items: center; gap: 6px; color: #0a7c1e; font-size: 12.500px; }
.when span { color: #4a4d54; letter-spacing: -.1px; }
.commit p { margin: 6px 0 5px; font-size: 14px; line-height: 22px; letter-spacing: .09px; }
.acts { display: flex; gap: 8px; font-size: 12.500px; color: #4a4d54; letter-spacing: .08px; }
.acts button { height: 28px; border-radius: 4px; background: #e3e4e7; padding-left: 9px; gap: 4px; }
.rb { width: 108px; }
.chg { width: 80px; }
.pv { width: 76px; }
.work { margin: 14px 10px 0; height: 34px; border-radius: 8px; background: #eff0f2; display: flex; align-items: center; padding: 0 11px 0 8px; font-size: 12.300px; color: #4a4d54; letter-spacing: -.13px; }
.work span { margin: 0 auto 0 8px; }
.prompt { margin: 22px 6px 0; height: 75px; border: 1px solid #0f87ff; border-radius: 6px; padding: 9px 12px 0 6px; }
.ph { height: 18px; border-left: 1px solid #000; margin-left: 3px; font-size: 14px; line-height: 18px; letter-spacing: .14px; color: #6e7178; }
.ctl { display: flex; align-items: center; margin-top: 16px; color: #33363c; }
.build { width: 80px; height: 24px; background: #eff0f2; border-radius: 4px; display: flex; align-items: center; padding-left: 6px; gap: 5px; font-size: 12.700px; margin-right: 9px; }
.build .up { margin-left: 7px; transform: rotate(180deg); }
.clip { margin-left: 13px; }
.tune { margin: 0 18px 0 auto; }
.send { color: #5b5e66; }

/* workspace panes */
.work-area { width: 957px; }
.panes { height: 40px; display: flex; align-items: center; font-size: 14px; letter-spacing: .15px; }
.pane { width: 160px; height: 28px; border-radius: 4px; display: flex; align-items: center; padding: 0 10px 0 6px; color: #5b5e66; }
.pane span { margin: 0 auto 0 6px; }
.pane.on { background: #eff0f2; }
.pane.on span { color: #0c0d10; }
.pane .term { margin: 0 2px 0 6px; color: #554a1c; }
.pane:nth-child(2) { padding-right: 6px; letter-spacing: -.1px; }
.cx { color: #85888e; }
.add { margin-left: 16px; color: #777; }
.right { margin-left: auto; display: flex; align-items: center; gap: 17px; }
.publish { width: 74px; height: 28px; margin: 0 -6px 0 -7px; border-radius: 4px; background: #6bb3ff; padding-left: 10px; gap: 5px; font-size: 12.300px; }
.right > :last-child { margin-right: 7px; }
.frame { height: 561px; border: 1px solid #a9abaf; border-radius: 5px; overflow: hidden; }
.framebar { height: 35px; display: flex; align-items: center; padding: 0 8px 1px; gap: 12px; color: #6b6e75; }
.framebar > .ln { stroke-width: 1.1; }
.framebar > :first-child { color: #222; margin-right: 2px; }
.framebar .rl { color: #222; margin: 0 -4px 0 1px; }
.addr { width: 785px; height: 24px; border-radius: 4px; background: #eff0f2; display: flex; align-items: center; padding-left: 4px; gap: 2px; font-size: 14px; letter-spacing: -.22px; margin-right: -2px; color: #5b5e66; }
.addr b { font-weight: 400; color: #000; }

.view { height: 524px; display: flex; }
.page { position: relative; width: 941px; height: 524px; overflow: hidden; background: linear-gradient(100deg, #eff4fc, #f1f4fe 55%, #f4f3fe); font-family: Inter, sans-serif; color: #020817; }
.lead { margin: -2px 0 64px; text-align: center; font-size: 18px; line-height: 28px; color: #64748b; }
.grid { margin-left: 15px; display: grid; grid-template-columns: 443px 443px; grid-auto-rows: 284px; gap: 24px; }
.card { background: #fff; border: 1px solid #e2e8f0; border-radius: 12px; padding: 24px; box-shadow: 0 1px 2px rgb(0 0 0 / .05); }
.lift { transform: translateY(-4px); }
.badges { display: flex; gap: 8px; margin-bottom: 16px; }
.badge { height: 22px; border-radius: 11px; background: #f1f5f9; font-size: 12px; line-height: 22px; font-weight: 600; text-align: center; }
.ghost { width: 94px; display: flex; align-items: center; padding-left: 12px; color: #fff; }
.ghost em { margin-left: 4px; font-weight: 700; }
.ibox { width: 56px; height: 56px; border-radius: 12px; background: #eff6ff; color: #60a5fa; display: grid; place-items: center; }
.ibox .ln { stroke-width: 2; stroke-linecap: round; stroke-linejoin: round; }
.card h3 { margin: 16px 0 8px; font-size: 20px; line-height: 28px; font-weight: 600; }
.card p { margin: 0; font-size: 14px; line-height: 20px; color: #64748b; }
.xp { margin-top: 9px; height: 20px; display: flex; align-items: center; gap: 8px; font-size: 12px; font-weight: 600; letter-spacing: -.1px; color: #f1f5f9; }
.fab { position: absolute; right: 24px; bottom: 23px; width: 64px; height: 56px; border-radius: 28px; background: #3b82f6; color: #fff; justify-content: center; box-shadow: 0 10px 15px -3px rgb(0 0 0 / .15), 0 4px 6px -4px rgb(0 0 0 / .15); }
.fab .ln { stroke-width: 2; }
.scroll { width: 14px; display: flex; flex-direction: column; align-items: center; padding: 6px 0; fill: #888; }
.scroll i { width: 9px; height: 30px; border-radius: 5px; background: #8b8b8b; margin: 301px 0 auto; }

/* taskbar */
.taskbar { height: 40px; flex: none; background: #211f1e; display: flex; color: #fff; }
.start { width: 48px; display: grid; place-items: center; }
.search { width: 288px; background: #f2f2f2; border: 1px solid #aaa; display: flex; align-items: center; padding-left: 11px; color: #222; font-size: 14.500px; }
.search span { margin-left: 11px; letter-spacing: -.27px; }
.petra { margin: 0 -9px 0 auto; clip-path: inset(0 9px 0 0); }
.task { position: relative; width: 49px; display: grid; place-items: center; }
.task:nth-child(3) { width: 50px; padding-right: 2px; }
.run::after { content: ""; position: absolute; left: 5px; right: 4px; bottom: 0; height: 2px; background: #76b9ed; }
.cur { background: #4c4b49; }
.cur::after { left: 0; right: 0; }
.cur b { position: absolute; left: 27px; top: 19px; font-size: 9px; line-height: 14px; font-weight: 400; }
.tray { margin-left: auto; display: flex; align-items: center; }
.t2 { margin-left: 12px; }
.t3 { margin-left: 11px; }
.t4 { margin-left: 9px; }
.t5 { margin-left: 8px; }
.t6 { margin-left: 7px; }
.t7 { margin-left: 9px; }
.lang, .clock { font-size: 11.600px; line-height: 17px; text-align: center; letter-spacing: -.25px; }
.lang { width: 26px; margin-left: 9px; }
.clock { width: 60px; margin: 0 13px 0 8px; }
.note { margin-right: 20px; }
.peek { width: 1px; height: 40px; background: #777; margin-right: 3px; }
```
